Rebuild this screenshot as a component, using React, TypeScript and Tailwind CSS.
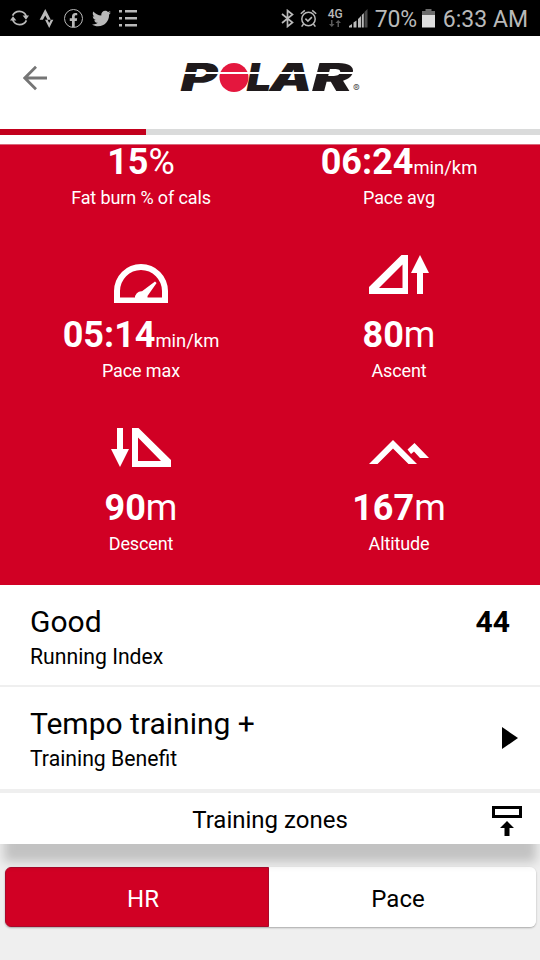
import type { ReactNode } from "react";
import clsx from "clsx";
import { FaFacebookF, FaStrava, FaTwitter } from "react-icons/fa";

interface MetricProps {
  icon?: ReactNode;
  value: string;
  unit: string;
  smallUnit?: boolean;
  label: string;
}

function StatusBar() {
  return (
    <div className="flex h-9 items-center bg-black text-[#b9b9b9]">
      <svg className="ml-[10px] h-[18px] w-[19px]" viewBox="0 0 19 18" fill="none" stroke="currentColor" strokeWidth="1.8">
        <path d="M2.6 6.6A7.4 7.4 0 0 1 16.2 7" />
        <path d="M16.4 11.4A7.4 7.4 0 0 1 2.8 11" />
        <path d="M12.6 6.5H19l-3 4.2zM6.4 11.5H0l3-4.2z" fill="currentColor" stroke="none" />
      </svg>
      <FaStrava className="ml-[8px] h-[19px] w-[19px]" />
      <span className="ml-[8px] flex h-[19px] w-[19px] items-end justify-center rounded-full border-[1.5px] border-current">
        <FaFacebookF className="h-[14px] w-[9px]" />
      </span>
      <FaTwitter className="ml-[9px] h-[19px] w-[19px]" />
      <svg className="ml-[8px] h-[18px] w-[19px]" viewBox="0 0 19 18" fill="currentColor">
        <path d="M0 1h3v2.6H0zM6 1h12v2.6H6zM0 8h3v2.6H0zM6 8h12v2.6H6zM0 15h3v2.6H0zM6 15h12v2.6H6z" />
      </svg>

      <div className="ml-auto flex items-center">
        <svg className="h-[19px] w-[13px]" viewBox="0 0 13 19" fill="none" stroke="currentColor" strokeWidth="1.7">
          <path d="M1 5l10.5 8.5-5 4v-16l5 4L1 14" />
        </svg>
        <svg className="ml-[6px] h-[19px] w-[17px]" viewBox="0 0 17 19" fill="none" stroke="currentColor" strokeWidth="1.5">
          <circle cx="8.5" cy="10" r="6.7" />
          <path d="M5.4 9.6l2.5 2.5 4-4M.8 4.8l4-3.4M16.2 4.8l-4-3.4M3.6 15l-2 2.6M13.4 15l2 2.6" />
        </svg>
        <div className="ml-[10px] flex w-[17px] flex-col items-center">
          <span className="text-[12px] leading-[11px] font-medium">4G</span>
          <svg className="h-[7px] w-[12px]" viewBox="0 0 12 7" fill="#5a5a5a">
            <path d="M2 0h1.5v4h2L2.8 7 0 4h2zM8.5 7H10V3h2L9.2 0 6.5 3h2z" />
          </svg>
        </div>
        <svg className="ml-[5px] h-[19px] w-[19px]" viewBox="0 0 19 19" fill="currentColor">
          <path d="M0 17l3-2v3.5H0zM4.5 13.5l3-2v7h-3zM9 10l3-3v11.5H9z" />
          <path d="M12.8 6l2-2v14.5h-2z" />
          <path d="M15.5 3l3-3v18.5h-3z" fill="#4a4a4a" />
        </svg>
        <span className="mt-[3px] ml-[7px] text-[23px] leading-9 tracking-[-0.2px]">70%</span>
        <svg className="ml-[5px] h-[19px] w-[13px]" viewBox="0 0 13 19">
          <path d="M3.5 0h6v2H13v5H0V2h3.5z" fill="#6c6c6c" />
          <path d="M0 6h13v12.5H0z" fill="#dedede" />
        </svg>
        <span className="mt-[3px] mr-[12px] ml-[8px] text-[23px] leading-9">6:33 AM</span>
      </div>
    </div>
  );
}

function PolarLogo() {
  const letter = {
    y: 32.3,
    fill: "#1f1a1c",
    fontSize: 38,
    fontWeight: 900,
    fontStyle: "italic",
    lengthAdjust: "spacingAndGlyphs",
  } as const;

  return (
    <svg className="h-9 w-[182px] overflow-visible font-[Inter]" viewBox="0 0 182 36">
      <text x="0.5" textLength="37" {...letter}>P</text>
      <text x="66.5" textLength="25" {...letter}>L</text>
      <text x="89.5" textLength="43" {...letter}>A</text>
      <text x="132" textLength="41" {...letter}>R</text>
      <circle cx="54" cy="18.5" r="14.5" fill="#e4173e" />
      <path d="M0 13h178v2H0z" fill="#fff" />
      <text x="173" y="32.5" fontSize="10" fill="#555">®</text>
    </svg>
  );
}

function GaugeIcon() {
  return (
    <svg className="h-12 w-[60px]" viewBox="0 0 60 48" fill="#fff">
      <path d="M3 48V36a27 27 0 0 1 54 0v12zM9 42.5h42V36a21 21 0 0 0-42 0z" fillRule="evenodd" />
      <path d="M24 43.5a6.5 6.5 0 0 1 7-7.2L44 26.4l1.6 1.6L36.5 41v2.5z" />
    </svg>
  );
}

function AscentIcon() {
  return (
    <svg className="h-12 w-[60px]" viewBox="0 0 60 48" fill="#fff">
      <path d="M0 39v-7L32.5 0H39v39zM10 33h23.5V9.5z" fillRule="evenodd" />
      <path d="M51 0l9 18h-6v21h-6V18h-6z" />
    </svg>
  );
}

function DescentIcon() {
  return (
    <svg className="h-12 w-[60px]" viewBox="0 0 60 48" fill="#fff">
      <path d="M6 0h6v21h6L9 39 0 21h6z" />
      <path d="M21 39V0h6.5L60 32v7zM27 9.5V33h23z" fillRule="evenodd" />
    </svg>
  );
}

function AltitudeIcon() {
  return (
    <svg className="h-12 w-[60px]" viewBox="0 0 60 48" fill="#fff">
      <path d="M0 36L24 12l24 24h-8.5L24 20.5 8.5 36z" />
      <path d="M38.5 21.5l7-6.5L60 30h-9l-6-6.5-3 2.5z" />
    </svg>
  );
}

function Metric({ icon, value, unit, smallUnit, label }: MetricProps) {
  return (
    <div className="flex flex-col items-center">
      {icon && <div className="mb-[11px] h-12">{icon}</div>}
      <div className="flex h-[42px] items-baseline text-[36px] leading-[42px] whitespace-nowrap">
        <span className="font-bold">{value}</span>
        <span className={clsx(smallUnit && "text-[18.4px] leading-none")}>{unit}</span>
      </div>
      <div className="mt-1 text-[18px] leading-[21px] tracking-[-0.12px]">{label}</div>
    </div>
  );
}

const metrics: MetricProps[] = [
  { value: "15", unit: "%", label: "Fat burn % of cals" },
  { value: "06:24", unit: "min/km", smallUnit: true, label: "Pace avg" },
  { icon: <GaugeIcon />, value: "05:14", unit: "min/km", smallUnit: true, label: "Pace max" },
  { icon: <AscentIcon />, value: "80", unit: "m", label: "Ascent" },
  { icon: <DescentIcon />, value: "90", unit: "m", label: "Descent" },
  { icon: <AltitudeIcon />, value: "167", unit: "m", label: "Altitude" },
];

export default function App() {
  return (
    <div className="flex h-[960px] w-[540px] flex-col overflow-hidden bg-[#efefef] font-[Roboto,sans-serif] text-black">
      <StatusBar />

      <header className="flex h-[93px] items-start bg-white">
        <button className="mt-[29px] ml-[23px]" aria-label="Back">
          <svg className="h-[26px] w-[25px]" viewBox="0 0 25 26" fill="none" stroke="#757575" strokeWidth="2.8">
            <path d="M24 13H2M13 1.8L1.8 13 13 24.2" />
          </svg>
        </button>
        <div className="mt-[23px] ml-[132px]">
          <PolarLogo />
        </div>
      </header>
      <div className="h-[6px] bg-[#dadbdb]">
        <div className="h-full w-[146px] bg-[#c3001d]" />
      </div>
      <div className="h-[9px] bg-white" />

      <section className="h-[441px] border-t border-[#d9677a] bg-[#d10024] px-3 text-white">
        <div className="-mt-1 grid grid-cols-2 gap-y-[47px]">
          {metrics.map((metric) => (
            <Metric key={metric.label} {...metric} />
          ))}
        </div>
      </section>

      <section className="flex h-[102px] justify-between border-b-2 border-[#efefef] bg-white px-[30px] pt-[19px]">
        <div>
          <div className="text-[30px] leading-9">Good</div>
          <div className="mt-[5px] text-[21.2px] leading-6">Running Index</div>
        </div>
        <div className="text-[30px] leading-9 font-bold">44</div>
      </section>

      <section className="flex h-[106px] justify-between border-b-4 border-[#efefef] bg-white pt-[19px] pr-[22px] pl-[30px]">
        <div>
          <div className="text-[30px] leading-9">Tempo training +</div>
          <div className="mt-[5px] text-[21.2px] leading-6">Training Benefit</div>
        </div>
        <svg className="mt-[21px] h-[22px] w-4" viewBox="0 0 16 22">
          <path d="M0 0l16 11L0 22z" />
        </svg>
      </section>

      <section className="relative z-10 flex h-[51px] shrink-0 items-start bg-white pr-[18px] shadow-[0_22px_10px_-4px_rgba(0,0,0,0.19)]">
        <h2 className="mt-[13px] ml-[48px] flex-1 text-center text-[24px] leading-7">Training zones</h2>
        <svg className="mt-[13px] h-[30px] w-[30px]" viewBox="0 0 30 30">
          <path d="M1.5 1.5h27v9h-27z" fill="none" stroke="#000" strokeWidth="3" />
          <path d="M15 15l7 7h-4.5v8h-5v-8H8z" />
        </svg>
      </section>

      <div className="mt-[23px] mr-[4px] ml-[5px] flex h-[60px] rounded-md text-[24px] shadow-[0_1px_2px_rgba(0,0,0,0.3)]">
        <button className="w-[264px] rounded-l-md border border-[#a8092b] bg-[#d10024] pt-[3px] pl-[12px] text-white">
          HR
        </button>
        <button className="flex-1 rounded-r-md bg-white pt-[3px] pr-[9px]">Pace</button>
      </div>
    </div>
  );
}
